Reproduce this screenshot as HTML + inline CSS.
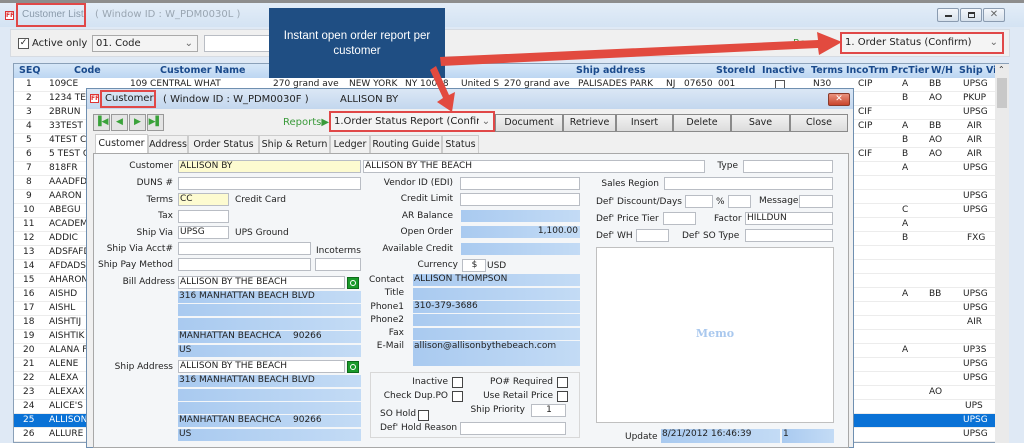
<!DOCTYPE html>
<html><head><meta charset="utf-8">
<style>
*{margin:0;padding:0;box-sizing:border-box}
body{width:1024px;height:443px;overflow:hidden;position:relative;background:#fff;font-family:"DejaVu Sans","Liberation Sans",sans-serif;font-size:9px;color:#222}
.a{position:absolute;white-space:nowrap}
.i{position:absolute;background:#fff;border:1px solid #b9bdc4;height:13px;padding-left:1px;line-height:11px;white-space:nowrap;overflow:hidden}
.y{background:#fdfbd0}
.b{position:absolute;background:linear-gradient(90deg,#a9caf0,#c3dbf5);height:12px;padding-left:1px;line-height:11px;white-space:nowrap;overflow:hidden}
.l{position:absolute;text-align:right;white-space:nowrap;line-height:13px}
.cb{position:absolute;width:11px;height:11px;border:1px solid #444;background:#fff}
.btn{position:absolute;top:114px;height:18px;border:1px solid #8a8a8a;background:linear-gradient(#f2f2f2,#dcdcdc);text-align:center;line-height:16px;font-size:9.5px}
.tab{position:absolute;top:135px;height:18px;border:1px solid #ccc;border-bottom:none;background:#f0f0f0;text-align:center;line-height:17px;font-size:9.5px}
.row{position:absolute;left:14px;width:981px;height:14px;border-bottom:1px solid #ececec;line-height:13px;overflow:hidden}
.row span{position:absolute}
.hd span{position:absolute;font-weight:bold;color:#1a4a8c;font-size:9.5px}
</style></head><body>
<div class="a" style="left:0;top:0;width:1024px;height:443px;background:#dfe9f5"></div>
<div class="a" style="left:0;top:0;width:1024px;height:3px;background:#8d8d8d"></div>
<div class="a" style="left:0;top:3px;width:1024px;height:24px;background:linear-gradient(#e3edf8,#d4e3f3)"></div>
<div class="a" style="left:5px;top:11px;width:9px;height:9px;background:#fff;border:1px solid #d33;color:#d33;font-size:6px;line-height:7px;font-weight:bold">FF</div>
<div class="a" style="left:16px;top:3px;width:70px;height:24px;border:2px solid #e04848;color:#8a9aaa;font-family:'Liberation Sans',sans-serif;font-size:10px;line-height:20px;padding-left:4px;overflow:hidden">Customer List</div>
<div class="a" style="left:95px;top:9px;color:#9aa6b2;font-size:10px">( Window ID : W_PDM0030L )</div>
<div class="a" style="left:937px;top:8px;width:22px;height:14px;border:1px solid #8a9bb0;border-radius:2px;background:linear-gradient(#f4f7fb,#d7e1ec)"><div class="a" style="left:7px;top:6px;width:7px;height:2px;background:#333"></div></div>
<div class="a" style="left:960px;top:8px;width:22px;height:14px;border:1px solid #8a9bb0;border-radius:2px;background:linear-gradient(#f4f7fb,#d7e1ec)"><div class="a" style="left:7px;top:3px;width:7px;height:6px;border:1px solid #333;border-top-width:2px"></div></div>
<div class="a" style="left:983px;top:8px;width:22px;height:14px;border:1px solid #8a9bb0;border-radius:2px;background:linear-gradient(#f4f7fb,#d7e1ec);text-align:center;line-height:12px;font-size:10px;color:#666">✕</div>
<div class="a" style="left:10px;top:29px;width:1000px;height:28px;background:#f0f0f0;border:1px solid #d6dbe2"></div>
<div class="cb" style="left:18px;top:38px;border-color:#555;font-size:9px;line-height:9px;text-align:center">✓</div>
<div class="a" style="left:32px;top:38px;font-size:10px">Active only</div>
<div class="i" style="left:92px;top:35px;width:106px;height:17px;line-height:15px;font-size:10px;padding-left:3px;border-color:#aaa;background:#f4f4f4">01. Code<span class="a" style="right:4px;top:0;color:#666">⌄</span></div>
<div class="i" style="left:204px;top:35px;width:70px;height:17px"></div>
<div class="a" style="left:793px;top:38px;color:#3a9a3a;font-size:10px">Reports</div>
<div class="i" style="left:840px;top:32px;width:164px;height:22px;border:2px solid #e04848;background:#f4f4f4;font-size:10px;line-height:18px;padding-left:3px">1. Order Status (Confirm)<span class="a" style="right:4px;top:0;color:#666">⌄</span></div>
<div class="a" style="left:13px;top:63px;width:996px;height:380px;background:#fff;border:1px solid #8aa0b8"></div>
<div class="a hd" style="left:14px;top:64px;width:981px;height:14px;background:linear-gradient(#d6e7f8,#bcd6f2);line-height:14px;overflow:hidden">
<span style="left:5px">SEQ</span><span style="left:60px">Code</span><span style="left:146px">Customer Name</span><span style="left:562px">Ship address</span><span style="left:702px">StoreId</span><span style="left:748px">Inactive</span><span style="left:797px">Terms</span><span style="left:832px">IncoTrm</span><span style="left:877px">PrcTier</span><span style="left:917px">W/H</span><span style="left:945px">Ship Via</span></div>
<div class="a" style="left:995px;top:64px;width:14px;height:379px;background:#eaeaea"><div class="a" style="left:2px;top:14px;width:10px;height:30px;background:#c8c8c8"></div><div class="a" style="left:3px;top:1px;font-size:8px">⌃</div></div>
<div class="row" style="top:78px"><span style="left:12px">1</span><span style="left:35px">109CE</span><span style="left:116px">109 CENTRAL WHAT</span><span style="left:259px">270 grand ave</span><span style="left:335px">NEW YORK</span><span style="left:391px">NY</span><span style="left:406px">10018</span><span style="left:447px;width:42px;overflow:hidden">United S</span><span style="left:490px">270 grand ave</span><span style="left:564px">PALISADES PARK</span><span style="left:652px">NJ</span><span style="left:670px">07650</span><span style="left:704px">001</span><span style="left:761px;top:2px;width:10px;height:10px;border:1px solid #555"></span><span style="left:799px">N30</span><span style="left:844px">CIP</span><span style="left:888px">A</span><span style="left:915px">BB</span><span style="left:949px">UPSG</span></div>
<div class="row" style="top:92px"><span style="left:12px">2</span><span style="left:35px">1234 TES</span><span style="left:888px">B</span><span style="left:915px">AO</span><span style="left:949px">PKUP</span></div>
<div class="row" style="top:106px"><span style="left:12px">3</span><span style="left:35px">2BRUN</span><span style="left:844px">CIF</span><span style="left:949px">UPSG</span></div>
<div class="row" style="top:120px"><span style="left:12px">4</span><span style="left:35px">33TEST</span><span style="left:844px">CIP</span><span style="left:888px">A</span><span style="left:915px">BB</span><span style="left:953px">AIR</span></div>
<div class="row" style="top:134px"><span style="left:12px">5</span><span style="left:35px">4TEST C</span><span style="left:888px">B</span><span style="left:915px">AO</span><span style="left:953px">AIR</span></div>
<div class="row" style="top:148px"><span style="left:12px">6</span><span style="left:35px">5 TEST C</span><span style="left:844px">CIF</span><span style="left:888px">B</span><span style="left:915px">AO</span><span style="left:953px">AIR</span></div>
<div class="row" style="top:162px"><span style="left:12px">7</span><span style="left:35px">818FR</span><span style="left:888px">A</span><span style="left:949px">UPSG</span></div>
<div class="row" style="top:176px"><span style="left:12px">8</span><span style="left:35px">AAADFD</span></div>
<div class="row" style="top:190px"><span style="left:12px">9</span><span style="left:35px">AARON</span><span style="left:949px">UPSG</span></div>
<div class="row" style="top:204px"><span style="left:9px">10</span><span style="left:35px">ABEGU</span><span style="left:888px">C</span><span style="left:949px">UPSG</span></div>
<div class="row" style="top:218px"><span style="left:9px">11</span><span style="left:35px">ACADEM</span><span style="left:888px">A</span></div>
<div class="row" style="top:232px"><span style="left:9px">12</span><span style="left:35px">ADDIC</span><span style="left:888px">B</span><span style="left:953px">FXG</span></div>
<div class="row" style="top:246px"><span style="left:9px">13</span><span style="left:35px">ADSFAFD</span></div>
<div class="row" style="top:260px"><span style="left:9px">14</span><span style="left:35px">AFDADS</span></div>
<div class="row" style="top:274px"><span style="left:9px">15</span><span style="left:35px">AHARON</span></div>
<div class="row" style="top:288px"><span style="left:9px">16</span><span style="left:35px">AISHD</span><span style="left:888px">A</span><span style="left:915px">BB</span><span style="left:949px">UPSG</span></div>
<div class="row" style="top:302px"><span style="left:9px">17</span><span style="left:35px">AISHL</span><span style="left:949px">UPSG</span></div>
<div class="row" style="top:316px"><span style="left:9px">18</span><span style="left:35px">AISHTIJ</span><span style="left:953px">AIR</span></div>
<div class="row" style="top:330px"><span style="left:9px">19</span><span style="left:35px">AISHTIK</span></div>
<div class="row" style="top:344px"><span style="left:9px">20</span><span style="left:35px">ALANA F</span><span style="left:888px">A</span><span style="left:949px">UP3S</span></div>
<div class="row" style="top:358px"><span style="left:9px">21</span><span style="left:35px">ALENE</span><span style="left:949px">UPSG</span></div>
<div class="row" style="top:372px"><span style="left:9px">22</span><span style="left:35px">ALEXA</span><span style="left:949px">UPSG</span></div>
<div class="row" style="top:386px"><span style="left:9px">23</span><span style="left:35px">ALEXAX</span><span style="left:915px">AO</span></div>
<div class="row" style="top:400px"><span style="left:9px">24</span><span style="left:35px">ALICE'S</span><span style="left:951px">UPS</span></div>
<div class="row" style="top:414px;background:#0a72d6;color:#fff"><span style="left:9px">25</span><span style="left:35px">ALLISON</span><span style="left:949px">UPSG</span></div>
<div class="row" style="top:428px"><span style="left:9px">26</span><span style="left:35px">ALLURE</span><span style="left:949px">UPSG</span></div>

<div class="a" style="left:86px;top:88px;width:768px;height:360px;background:#f0f0f0;border:1px solid #6f8fb0"></div>
<div class="a" style="left:87px;top:89px;width:766px;height:20px;background:linear-gradient(#dbe7f5,#c3d7ee)"></div>
<div class="a" style="left:90px;top:94px;width:9px;height:9px;background:#fff;border:1px solid #d33;color:#d33;font-size:6px;line-height:7px;font-weight:bold">FF</div>
<div class="a" style="left:100px;top:90px;width:56px;height:18px;border:2px solid #e04848;font-size:10px;line-height:14px;padding-left:3px">Customer</div>
<div class="a" style="left:163px;top:94px;font-size:10px">( Window ID : W_PDM0030F )</div>
<div class="a" style="left:340px;top:94px;font-size:10px">ALLISON BY</div>
<div class="a" style="left:828px;top:93px;width:22px;height:13px;border:1px solid #8a3a2a;border-radius:2px;background:linear-gradient(#e9937e,#c9442c);color:#fff;text-align:center;font-size:9px;line-height:11px;font-weight:bold">✕</div>
<div class="a" style="left:93px;top:114px;width:70px;height:18px">
<div class="a" style="left:0;top:0;width:17px;height:17px;border:1px solid #999;background:#e4e4e4;color:#3aa23a;font-size:9px;text-align:center;line-height:15px">▐◀</div>
<div class="a" style="left:18px;top:0;width:17px;height:17px;border:1px solid #999;background:#e4e4e4;color:#3aa23a;font-size:9px;text-align:center;line-height:15px">◀</div>
<div class="a" style="left:36px;top:0;width:17px;height:17px;border:1px solid #999;background:#e4e4e4;color:#3aa23a;font-size:9px;text-align:center;line-height:15px">▶</div>
<div class="a" style="left:54px;top:0;width:17px;height:17px;border:1px solid #999;background:#e4e4e4;color:#3aa23a;font-size:9px;text-align:center;line-height:15px">▶▌</div></div>
<div class="a" style="left:283px;top:117px;color:#3a9a3a;font-size:10px">Reports▶</div>
<div class="i" style="left:329px;top:111px;width:166px;height:21px;border:2px solid #e04848;background:#f4f4f4;font-size:10px;line-height:17px;padding-left:3px">1.Order Status Report (Confirm)<span class="a" style="right:0;top:0;width:14px;background:#f4f4f4;color:#666;text-align:center">⌄</span></div>
<div class="btn" style="left:495px;width:68px">Document</div>
<div class="btn" style="left:563px;width:53px">Retrieve</div>
<div class="btn" style="left:616px;width:57px">Insert</div>
<div class="btn" style="left:673px;width:58px">Delete</div>
<div class="btn" style="left:731px;width:59px">Save</div>
<div class="btn" style="left:790px;width:58px">Close</div>
<div class="tab" style="left:95px;width:53px;background:#fff;height:19px;top:134px">Customer</div>
<div class="tab" style="left:148px;width:40px">Address</div>
<div class="tab" style="left:188px;width:71px">Order Status</div>
<div class="tab" style="left:259px;width:71px">Ship &amp; Return</div>
<div class="tab" style="left:330px;width:40px">Ledger</div>
<div class="tab" style="left:370px;width:72px">Routing Guide</div>
<div class="tab" style="left:442px;width:37px">Status</div>
<div class="a" style="left:93px;top:153px;width:756px;height:295px;background:#f4f6f8;border:1px solid #a8a8a8"></div>

<div class="l" style="left:100px;width:73px;top:160px">Customer</div>
<div class="i y" style="left:178px;top:160px;width:183px">ALLISON BY</div>
<div class="i" style="left:363px;top:160px;width:342px">ALLISON BY THE BEACH</div>
<div class="l" style="left:700px;width:38px;top:160px">Type</div>
<div class="i" style="left:743px;top:160px;width:90px"></div>
<div class="l" style="left:100px;width:73px;top:177px">DUNS #</div>
<div class="i" style="left:178px;top:177px;width:183px"></div>
<div class="l" style="left:100px;width:73px;top:194px">Terms</div>
<div class="i y" style="left:178px;top:193px;width:51px">CC</div>
<div class="a" style="left:235px;top:195px">Credit Card</div>
<div class="l" style="left:100px;width:73px;top:210px">Tax</div>
<div class="i" style="left:178px;top:210px;width:51px"></div>
<div class="l" style="left:100px;width:73px;top:227px">Ship Via</div>
<div class="i" style="left:178px;top:226px;width:51px">UPSG</div>
<div class="a" style="left:235px;top:228px">UPS Ground</div>
<div class="l" style="left:96px;width:77px;top:243px">Ship Via Acct#</div>
<div class="i" style="left:178px;top:242px;width:133px"></div>
<div class="a" style="left:316px;top:246px">Incoterms</div>
<div class="l" style="left:90px;width:83px;top:259px">Ship Pay Method</div>
<div class="i" style="left:178px;top:258px;width:133px"></div>
<div class="i" style="left:315px;top:258px;width:46px"></div>
<div class="l" style="left:96px;width:79px;top:276px">Bill Address</div>
<div class="i" style="left:178px;top:276px;width:167px">ALLISON BY THE BEACH</div>
<div class="a" style="left:347px;top:277px;width:12px;height:12px;background:#1a9a2a;border:1px solid #0d6a1a"><div class="a" style="left:2px;top:2px;width:6px;height:6px;border:1px solid #fff;border-radius:50%"></div></div>
<div class="b" style="left:178px;top:291px;width:183px">316 MANHATTAN BEACH BLVD</div>
<div class="b" style="left:178px;top:304px;width:183px"></div>
<div class="b" style="left:178px;top:318px;width:183px"></div>
<div class="b" style="left:178px;top:331px;width:183px">MANHATTAN BEACHCA<span class="a" style="left:115px">90266</span></div>
<div class="b" style="left:178px;top:345px;width:183px">US</div>
<div class="l" style="left:96px;width:77px;top:361px">Ship Address</div>
<div class="i" style="left:178px;top:360px;width:167px">ALLISON BY THE BEACH</div>
<div class="a" style="left:347px;top:361px;width:12px;height:12px;background:#1a9a2a;border:1px solid #0d6a1a"><div class="a" style="left:2px;top:2px;width:6px;height:6px;border:1px solid #fff;border-radius:50%"></div></div>
<div class="b" style="left:178px;top:375px;width:183px">316 MANHATTAN BEACH BLVD</div>
<div class="b" style="left:178px;top:389px;width:183px"></div>
<div class="b" style="left:178px;top:402px;width:183px"></div>
<div class="b" style="left:178px;top:415px;width:183px">MANHATTAN BEACHCA<span class="a" style="left:115px">90266</span></div>
<div class="b" style="left:178px;top:429px;width:183px">US</div>

<div class="l" style="left:360px;width:93px;top:177px">Vendor ID (EDI)</div>
<div class="i" style="left:460px;top:177px;width:120px"></div>
<div class="l" style="left:360px;width:93px;top:193px">Credit Limit</div>
<div class="i" style="left:460px;top:193px;width:120px"></div>
<div class="l" style="left:360px;width:93px;top:210px">AR Balance</div>
<div class="b" style="left:461px;top:210px;width:119px"></div>
<div class="l" style="left:360px;width:93px;top:226px">Open Order</div>
<div class="b" style="left:461px;top:226px;width:119px;text-align:right;padding-right:2px">1,100.00</div>
<div class="l" style="left:360px;width:93px;top:243px">Available Credit</div>
<div class="b" style="left:461px;top:243px;width:119px"></div>
<div class="l" style="left:380px;width:78px;top:259px">Currency</div>
<div class="i" style="left:462px;top:259px;width:24px;text-align:center">$</div>
<div class="a" style="left:487px;top:261px">USD</div>
<div class="l" style="left:360px;width:44px;top:274px">Contact</div>
<div class="b" style="left:413px;top:274px;width:167px">ALLISON THOMPSON</div>
<div class="l" style="left:360px;width:44px;top:287px">Title</div>
<div class="b" style="left:413px;top:288px;width:167px"></div>
<div class="l" style="left:360px;width:44px;top:301px">Phone1</div>
<div class="b" style="left:413px;top:301px;width:167px">310-379-3686</div>
<div class="l" style="left:360px;width:44px;top:314px">Phone2</div>
<div class="b" style="left:413px;top:314px;width:167px"></div>
<div class="l" style="left:360px;width:44px;top:327px">Fax</div>
<div class="b" style="left:413px;top:328px;width:167px"></div>
<div class="l" style="left:360px;width:44px;top:340px">E-Mail</div>
<div class="b" style="left:413px;top:341px;width:167px;height:25px">allison@allisonbythebeach.com</div>
<div class="a" style="left:370px;top:372px;width:210px;height:66px;border:1px solid #d8d8d8"></div>
<div class="l" style="left:380px;width:68px;top:376px">Inactive</div><div class="cb" style="left:452px;top:377px"></div>
<div class="l" style="left:470px;width:83px;top:376px">PO# Required</div><div class="cb" style="left:557px;top:377px"></div>
<div class="l" style="left:370px;width:78px;top:390px">Check Dup.PO</div><div class="cb" style="left:452px;top:391px"></div>
<div class="l" style="left:470px;width:83px;top:390px">Use Retail Price</div><div class="cb" style="left:557px;top:391px"></div>
<div class="a" style="left:380px;top:409px">SO Hold</div><div class="cb" style="left:418px;top:410px"></div>
<div class="l" style="left:440px;width:85px;top:404px">Ship Priority</div>
<div class="i" style="left:531px;top:404px;width:35px;text-align:center">1</div>
<div class="a" style="left:380px;top:423px">Def' Hold Reason</div>
<div class="i" style="left:460px;top:422px;width:106px"></div>

<div class="l" style="left:590px;width:69px;top:178px">Sales Region</div>
<div class="i" style="left:664px;top:177px;width:169px"></div>
<div class="a" style="left:596px;top:197px">Def' Discount/Days</div>
<div class="i" style="left:685px;top:195px;width:28px"></div>
<div class="a" style="left:716px;top:197px">%</div>
<div class="i" style="left:728px;top:195px;width:23px"></div>
<div class="a" style="left:759px;top:196px">Message</div>
<div class="i" style="left:799px;top:195px;width:34px"></div>
<div class="a" style="left:596px;top:214px">Def' Price Tier</div>
<div class="i" style="left:663px;top:212px;width:33px"></div>
<div class="a" style="left:714px;top:214px">Factor</div>
<div class="i" style="left:745px;top:212px;width:88px">HILLDUN</div>
<div class="a" style="left:596px;top:231px">Def' WH</div>
<div class="i" style="left:636px;top:229px;width:33px"></div>
<div class="a" style="left:682px;top:231px">Def' SO Type</div>
<div class="i" style="left:745px;top:229px;width:88px"></div>
<div class="a" style="left:596px;top:247px;width:238px;height:176px;background:#fff;border:1px solid #c0c0c0;text-align:center;line-height:172px;font-family:'DejaVu Serif',serif;font-weight:bold;font-size:11px;color:#a9c8ee">Memo</div>
<div class="a" style="left:625px;top:432px">Update</div>
<div class="b" style="left:661px;top:429px;width:119px;height:14px">8/21/2012 16:46:39</div>
<div class="b" style="left:782px;top:429px;width:52px;height:14px">1</div>

<div class="a" style="left:269px;top:8px;width:176px;height:70px;background:#1f4e83;color:#fff;font-family:'Liberation Sans',sans-serif;font-size:11.5px;text-align:center;padding-top:21px;line-height:15px;white-space:normal">Instant open order report per customer</div>
<svg class="a" style="left:0;top:0" width="1024" height="443">
<polygon points="440,57 818,40 817,32 842,42 819,55 818,48 441,66" fill="#e24a3f"/>
<polygon points="430,70 436,66 449,95 455,92 452,112 437,102 443,98" fill="#e24a3f"/>
</svg>
</body></html>
